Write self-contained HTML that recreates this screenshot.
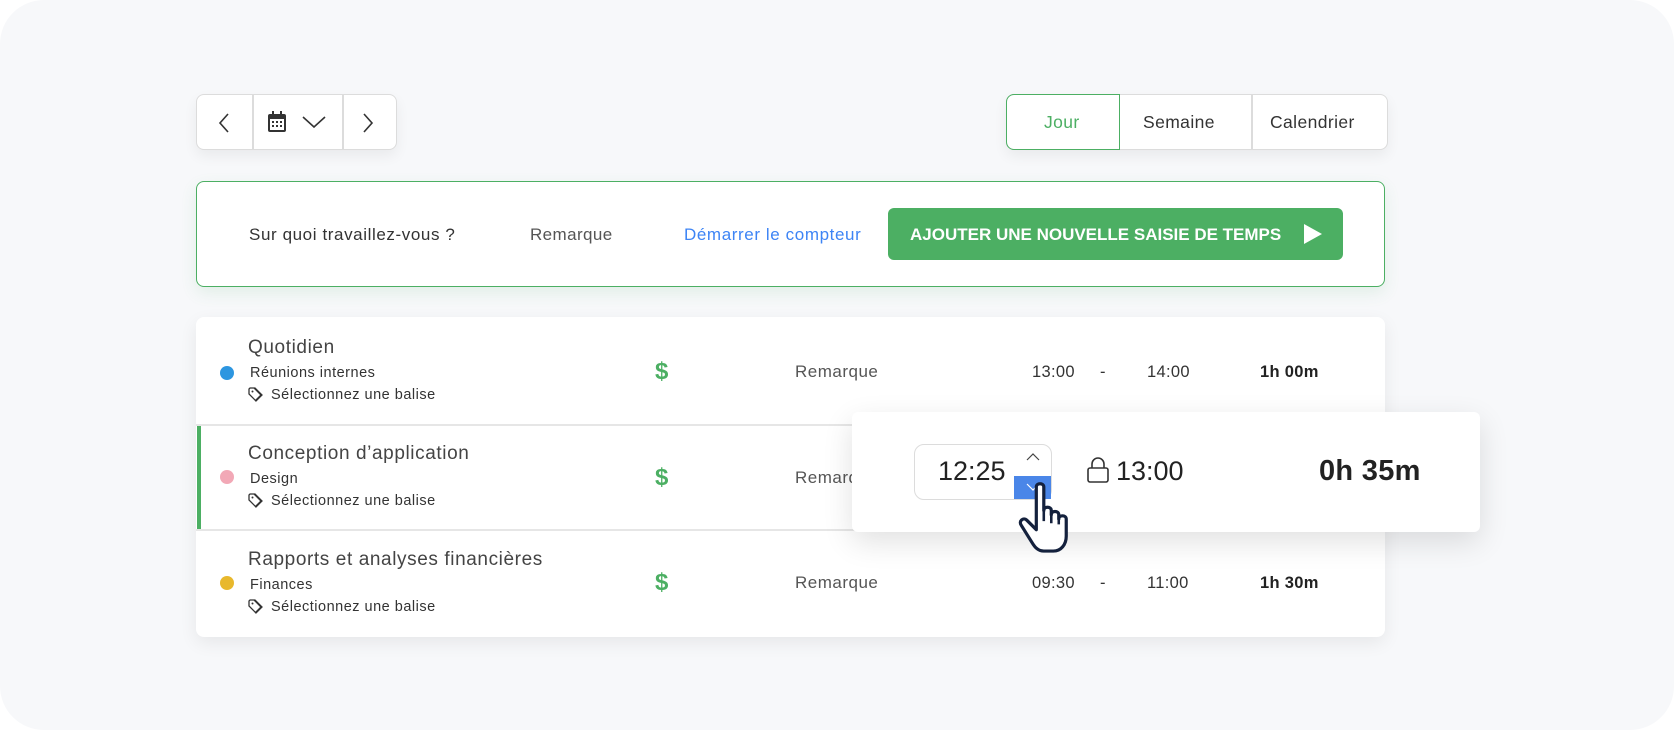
<!DOCTYPE html>
<html><head><meta charset="utf-8"><style>
*{box-sizing:border-box;margin:0;padding:0}
body{width:1674px;height:730px;background:#fff;font-family:"Liberation Sans",sans-serif;position:relative;overflow:hidden;color:#333}
.bg{position:absolute;left:0;top:0;width:1674px;height:730px;background:#f7f8fa;border-radius:44px}
.a{position:absolute;white-space:nowrap}
.box{position:absolute;background:#fff;border:1.5px solid #dcdcdc;border-radius:8px;box-shadow:0 6px 14px rgba(0,0,0,.06)}
.vd{position:absolute;top:0;bottom:0;width:1.5px;background:#dcdcdc}
.t{font-size:19px;color:#444;letter-spacing:.6px}
.s{font-size:14.5px;color:#333;letter-spacing:.5px}
.d{position:absolute;width:14px;height:14px;border-radius:50%}
.dol{font-size:24px;font-weight:bold;color:#4caf63}
.m{font-size:17px;color:#555;letter-spacing:.5px}
.tm{font-size:16.5px;color:#333;letter-spacing:.3px}
.du{font-size:16.5px;font-weight:bold;color:#222;letter-spacing:.3px}
</style></head><body>
<div class="bg"></div>

<div class="box" style="left:196px;top:94px;width:201px;height:56px">
 <div class="vd" style="left:55px"></div><div class="vd" style="left:145px"></div>
 <svg class="a" style="left:20px;top:17px" width="14" height="22" viewBox="0 0 14 22"><path d="M11 2L3 11l8 9" fill="none" stroke="#333" stroke-width="1.6"/></svg>
 <svg class="a" style="left:69px;top:15px" width="22" height="24" viewBox="0 0 22 24"><rect x="2" y="4" width="18" height="18" rx="2" fill="#333"/><rect x="6" y="1" width="2" height="5" fill="#333"/><rect x="14" y="1" width="2" height="5" fill="#333"/><rect x="4" y="9" width="14" height="11" fill="#fff"/><g fill="#333"><rect x="6" y="11" width="2" height="2"/><rect x="10" y="11" width="2" height="2"/><rect x="14" y="11" width="2" height="2"/><rect x="6" y="15" width="2" height="2"/><rect x="10" y="15" width="2" height="2"/><rect x="14" y="15" width="2" height="2"/></g></svg>
 <svg class="a" style="left:104px;top:20px" width="26" height="14" viewBox="0 0 26 14"><path d="M2 2l11 10L24 2" fill="none" stroke="#333" stroke-width="1.6"/></svg>
 <svg class="a" style="left:164px;top:17px" width="14" height="22" viewBox="0 0 14 22"><path d="M3 2l8 9-8 9" fill="none" stroke="#333" stroke-width="1.6"/></svg>
</div>

<div class="box" style="left:1006px;top:94px;width:382px;height:56px">
 <div class="a" style="left:-1.5px;top:-1.5px;width:114px;height:56px;border:1.5px solid #4caf63;border-radius:8px 0 0 8px"></div>
 <div class="vd" style="left:244px"></div>
 <div class="a" style="left:37px;top:17px;font-size:17.5px;color:#4caf63;letter-spacing:.4px">Jour</div>
 <div class="a" style="left:136px;top:17px;font-size:17.5px;color:#333;letter-spacing:.4px">Semaine</div>
 <div class="a" style="left:263px;top:17px;font-size:17.5px;color:#333;letter-spacing:.4px">Calendrier</div>
</div>

<div class="a" style="left:196px;top:181px;width:1189px;height:106px;background:#fff;border:1.5px solid #4caf63;border-radius:8px;box-shadow:0 6px 16px rgba(76,175,99,.12)"></div>
<div class="a" style="left:249px;top:225px;font-size:17px;color:#333;letter-spacing:.6px">Sur quoi travaillez-vous ?</div>
<div class="a" style="left:530px;top:225px;font-size:17px;color:#555;letter-spacing:.4px">Remarque</div>
<div class="a" style="left:684px;top:225px;font-size:17px;color:#3d84f5;letter-spacing:.6px">Démarrer le compteur</div>
<div class="a" style="left:888px;top:208px;width:455px;height:52px;background:#4caf63;border-radius:6px"></div>
<div class="a" style="left:910px;top:225px;font-size:17px;color:#fff;font-weight:bold;letter-spacing:0">AJOUTER UNE NOUVELLE SAISIE DE TEMPS</div>
<svg class="a" style="left:1302px;top:223px" width="22" height="22" viewBox="0 0 22 22"><path d="M2 1l18 10L2 21z" fill="#fff"/></svg>

<div class="a" style="left:196px;top:317px;width:1189px;height:320px;background:#fff;border-radius:8px;box-shadow:0 6px 18px rgba(0,0,0,.07)"></div>
<div class="a" style="left:196px;top:424px;width:1189px;height:2px;background:#e6e6e6"></div>
<div class="a" style="left:196px;top:529px;width:1189px;height:2px;background:#e6e6e6"></div>
<div class="a" style="left:197px;top:426px;width:4px;height:103px;background:#4caf63"></div>

<!-- row1 -->
<div class="a t" style="left:248px;top:337px">Quotidien</div>
<div class="d" style="left:220px;top:366px;background:#2d96e0"></div>
<div class="a s" style="left:250px;top:365px">Réunions internes</div>
<svg class="a" style="left:248px;top:387px" width="18" height="16" viewBox="0 0 18 16"><path d="M1 2v5l7 7 6-6-7-7H2z M6 1l7 7-6 6" fill="none" stroke="#333" stroke-width="1.3"/><circle cx="4.5" cy="4.5" r="1" fill="#333"/></svg>
<div class="a s" style="left:271px;top:387px">Sélectionnez une balise</div>
<div class="a dol" style="left:655px;top:358px">$</div>
<div class="a m" style="left:795px;top:362px">Remarque</div>
<div class="a tm" style="left:1032px;top:363px">13:00</div>
<div class="a tm" style="left:1100px;top:363px">-</div>
<div class="a tm" style="left:1147px;top:363px">14:00</div>
<div class="a du" style="left:1260px;top:363px">1h 00m</div>

<!-- row2 -->
<div class="a t" style="left:248px;top:443px">Conception d’application</div>
<div class="d" style="left:220px;top:470px;background:#f2a8b6"></div>
<div class="a s" style="left:250px;top:471px">Design</div>
<svg class="a" style="left:248px;top:493px" width="18" height="16" viewBox="0 0 18 16"><path d="M1 2v5l7 7 6-6-7-7H2z M6 1l7 7-6 6" fill="none" stroke="#333" stroke-width="1.3"/><circle cx="4.5" cy="4.5" r="1" fill="#333"/></svg>
<div class="a s" style="left:271px;top:493px">Sélectionnez une balise</div>
<div class="a dol" style="left:655px;top:464px">$</div>
<div class="a m" style="left:795px;top:468px">Remarque</div>

<!-- row3 -->
<div class="a t" style="left:248px;top:549px">Rapports et analyses financières</div>
<div class="d" style="left:220px;top:576px;background:#e8b82c"></div>
<div class="a s" style="left:250px;top:577px">Finances</div>
<svg class="a" style="left:248px;top:599px" width="18" height="16" viewBox="0 0 18 16"><path d="M1 2v5l7 7 6-6-7-7H2z M6 1l7 7-6 6" fill="none" stroke="#333" stroke-width="1.3"/><circle cx="4.5" cy="4.5" r="1" fill="#333"/></svg>
<div class="a s" style="left:271px;top:599px">Sélectionnez une balise</div>
<div class="a dol" style="left:655px;top:569px">$</div>
<div class="a m" style="left:795px;top:573px">Remarque</div>
<div class="a tm" style="left:1032px;top:574px">09:30</div>
<div class="a tm" style="left:1100px;top:574px">-</div>
<div class="a tm" style="left:1147px;top:574px">11:00</div>
<div class="a du" style="left:1260px;top:574px">1h 30m</div>

<!-- popup -->
<div class="a" style="left:852px;top:412px;width:628px;height:120px;background:#fff;border-radius:6px;box-shadow:0 10px 30px rgba(0,0,0,.12)"></div>
<div class="a" style="left:914px;top:444px;width:138px;height:56px;border:1.5px solid #dcdcdc;border-radius:10px;background:#fff"></div>
<div class="a" style="left:1014px;top:476px;width:37px;height:23px;background:#4a86e8"></div>
<svg class="a" style="left:1025px;top:452px" width="16" height="10" viewBox="0 0 16 10"><path d="M2 8l6-6 6 6" fill="none" stroke="#444" stroke-width="1.2"/></svg>
<svg class="a" style="left:1025px;top:482px" width="16" height="10" viewBox="0 0 16 10"><path d="M2 2l6 6 6-6" fill="none" stroke="#fff" stroke-width="1.2"/></svg>
<div class="a" style="left:938px;top:456px;font-size:27px;color:#222">12:25</div>
<svg class="a" style="left:1086px;top:456px" width="24" height="28" viewBox="0 0 24 28"><rect x="2" y="12" width="20" height="14" rx="2" fill="none" stroke="#333" stroke-width="1.6"/><path d="M6 12V8a6 6 0 0 1 12 0v4" fill="none" stroke="#333" stroke-width="1.6"/></svg>
<div class="a" style="left:1116px;top:456px;font-size:27px;color:#222">13:00</div>
<div class="a" style="left:1319px;top:455px;font-size:29px;color:#222;font-weight:bold;letter-spacing:.3px">0h 35m</div>
<svg class="a" style="left:1016px;top:480px" width="62" height="78" viewBox="0 0 58 72"><path d="M19 6c0-4 7-4 7 0v22c0-4 7-4 7 0v4c0-4 7-4 7 0v4c0-4 7-4 7 0v16c0 8-5 14-12 14H26c-5 0-8-3-11-8L5 42c-3-4 2-8 5-5l9 9z" fill="#fff" stroke="#14213d" stroke-width="3" stroke-linejoin="round"/><path d="M26 28v10M33 32v8M40 36v5" stroke="#14213d" stroke-width="2.4"/></svg>
</body></html>
